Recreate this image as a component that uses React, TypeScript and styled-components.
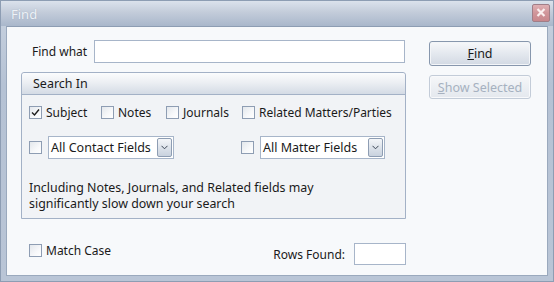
import React from 'react';
import styled, { createGlobalStyle } from 'styled-components';

const GlobalStyle = createGlobalStyle`
    html, body {
        margin: 0;
        padding: 0;
        background: #ffffff;
    }
    * {
        box-sizing: border-box;
    }
`;

const FONT = `"Noto Sans", "Open Sans", "Liberation Sans", sans-serif`;

const Window = styled.div`
    width: 554px;
    height: 282px;
    display: flex;
    flex-direction: column;
    padding: 0 5px 5px 5px;
    background: linear-gradient(to bottom, #c9d3e0 0%, #b5c2d4 30%, #b9c5d6 100%);
    border: 1px solid #8d9db3;
    font-family: ${FONT};
    font-size: 12px;
    color: #1a1a1a;
`;

const TitleBar = styled.div`
    height: 25px;
    display: flex;
    align-items: center;
    justify-content: space-between;
    margin: 0 -5px;
    padding: 0 3px 0 10px;
    background: linear-gradient(to bottom, #dbe2ec 0%, #c3ccda 45%, #a9b7cb 100%);
`;

const TitleText = styled.span`
    color: #eef2f7;
    font-size: 13px;
    text-shadow: 0 0 1px rgba(120, 135, 160, 0.5);
`;

const CloseButton = styled.div`
    width: 18px;
    height: 18px;
    margin-top: -2px;
    display: flex;
    align-items: center;
    justify-content: center;
    border: 1px solid #a07e88;
    border-radius: 2px;
    background: linear-gradient(to bottom, #dfb0b4 0%, #d0959a 50%, #c8878d 100%);
`;

const Body = styled.div`
    flex: 1;
    display: flex;
    background: #f7f9fb;
    border: 1px solid #9aa9bd;
    border-top-color: #8d9db3;
`;

const LeftColumn = styled.div`
    width: 399px;
    padding: 13px 0 0 14px;
    display: flex;
    flex-direction: column;
`;

const RightColumn = styled.div`
    padding: 14px 0 0 23px;
    display: flex;
    flex-direction: column;
    gap: 9px;
`;

const FindRow = styled.div`
    display: flex;
    align-items: center;
    height: 23px;
`;

const Label = styled.span<{ $width?: number }>`
    display: inline-block;
    width: ${(p) => (p.$width ? `${p.$width}px` : 'auto')};
    padding-left: 11px;
    white-space: nowrap;
`;

const TextBox = styled.div<{ $width: number; $height: number }>`
    width: ${(p) => p.$width}px;
    height: ${(p) => p.$height}px;
    background: #ffffff;
    border: 1px solid #a7b5c9;
`;

const GroupBox = styled.div`
    margin-top: 9px;
    width: 385px;
    height: 147px;
    border: 1px solid #a3b1c6;
    border-radius: 3px 3px 0 0;
    background: #f1f3f6;
    display: flex;
    flex-direction: column;
`;

const GroupHeader = styled.div`
    height: 22px;
    display: flex;
    align-items: center;
    padding-left: 11px;
    border-bottom: 1px solid #a3b1c6;
    border-radius: 3px 3px 0 0;
    background: linear-gradient(to bottom, #fbfcfd 0%, #eceff3 45%, #d4dbe5 100%);
    font-size: 12.5px;
`;

const GroupContent = styled.div`
    padding: 9px 0 0 7px;
    display: flex;
    flex-direction: column;
`;

const CheckRow = styled.div`
    display: flex;
    align-items: center;
    height: 16px;
`;

const ComboRow = styled.div`
    display: flex;
    align-items: center;
    margin-top: 16px;
    height: 23px;
`;

const CheckItem = styled.label<{ $width?: number }>`
    display: flex;
    align-items: center;
    gap: 4px;
    width: ${(p) => (p.$width ? `${p.$width}px` : 'auto')};
    white-space: nowrap;
`;

const Box = styled.span`
    width: 13px;
    height: 13px;
    flex: none;
    display: flex;
    align-items: center;
    justify-content: center;
    border: 1px solid #8e9db3;
    background: linear-gradient(135deg, #e3e7ec 0%, #f7f8fa 60%, #ffffff 100%);
`;

const Spacer = styled.span<{ $width: number }>`
    width: ${(p) => p.$width}px;
    flex: none;
`;

const Combo = styled.div<{ $width: number }>`
    width: ${(p) => p.$width}px;
    height: 23px;
    margin-left: 6px;
    display: flex;
    align-items: center;
    justify-content: space-between;
    padding: 0 1px 0 2px;
    background: #ffffff;
    border: 1px solid #a7b5c9;
    font-size: 12.5px;
`;

const ComboButton = styled.span`
    width: 15px;
    height: 19px;
    display: flex;
    align-items: center;
    justify-content: center;
    border: 1px solid #8e9db3;
    border-radius: 2px;
    background: linear-gradient(to bottom, #f4f6f9 0%, #dde3eb 50%, #c9d2de 100%);
`;

const Note = styled.div`
    margin-top: 21px;
    line-height: 16px;
    font-size: 12.4px;
`;

const BottomRow = styled.div`
    margin-top: 23px;
    display: flex;
    align-items: flex-start;
    justify-content: space-between;
    width: 385px;
    padding-left: 8px;
`;

const RowsFound = styled.div`
    display: flex;
    align-items: center;
    gap: 9px;
    padding-top: 1px;
`;

const Button = styled.div<{ $disabled?: boolean }>`
    width: 102px;
    height: ${(p) => (p.$disabled ? 24 : 25)}px;
    display: flex;
    align-items: center;
    justify-content: center;
    border: 1px solid ${(p) => (p.$disabled ? '#c3ccd8' : '#8797ad')};
    border-radius: 3px;
    color: ${(p) => (p.$disabled ? '#a6b1c0' : '#1a1a1a')};
    background: ${(p) =>
        p.$disabled
            ? 'linear-gradient(to bottom, #f6f7f9 0%, #eceff3 50%, #e4e8ee 100%)'
            : 'linear-gradient(to bottom, #f7f8fa 0%, #e6eaf0 45%, #d2d9e3 100%)'};
    box-shadow: inset 0 0 0 1px ${(p) => (p.$disabled ? '#f8f9fb' : '#f3f5f8')};
    font-size: 12.5px;
`;

const Mnemonic = styled.span`
    text-decoration: underline;
`;

function CheckBox({ checked }: { checked?: boolean }) {
    return (
        <Box>
            {checked && (
                <svg width="9" height="9" viewBox="0 0 9 9">
                    <polyline points="1,4.5 3.5,7 8,1.5" fill="none" stroke="#1e1e1e" strokeWidth="1.4" />
                </svg>
            )}
        </Box>
    );
}

function Select({ width, value }: { width: number; value: string }) {
    return (
        <Combo $width={width}>
            <span>{value}</span>
            <ComboButton>
                <svg width="7" height="5" viewBox="0 0 7 5">
                    <polyline points="0.5,0.8 3.5,3.8 6.5,0.8" fill="none" stroke="#3c4656" strokeWidth="1" />
                </svg>
            </ComboButton>
        </Combo>
    );
}

export default function App() {
    return (
        <>
            <GlobalStyle />
            <Window>
                <TitleBar>
                    <TitleText>Find</TitleText>
                    <CloseButton>
                        <svg width="10" height="9" viewBox="0 0 10 9">
                            <path d="M1.5 1 L8.5 8 M8.5 1 L1.5 8" stroke="#fbeff0" strokeWidth="2.2" />
                        </svg>
                    </CloseButton>
                </TitleBar>
                <Body>
                    <LeftColumn>
                        <FindRow>
                            <Label $width={73}>Find what</Label>
                            <TextBox $width={311} $height={23} />
                        </FindRow>
                        <GroupBox>
                            <GroupHeader>Search In</GroupHeader>
                            <GroupContent>
                                <CheckRow>
                                    <CheckItem $width={72}>
                                        <CheckBox checked />
                                        Subject
                                    </CheckItem>
                                    <CheckItem $width={65}>
                                        <CheckBox />
                                        Notes
                                    </CheckItem>
                                    <CheckItem $width={76}>
                                        <CheckBox />
                                        Journals
                                    </CheckItem>
                                    <CheckItem>
                                        <CheckBox />
                                        Related Matters/Parties
                                    </CheckItem>
                                </CheckRow>
                                <ComboRow>
                                    <CheckBox />
                                    <Select width={126} value="All Contact Fields" />
                                    <Spacer $width={67} />
                                    <CheckBox />
                                    <Select width={125} value="All Matter Fields" />
                                </ComboRow>
                                <Note>
                                    Including Notes, Journals, and Related fields may
                                    <br />
                                    significantly slow down your search
                                </Note>
                            </GroupContent>
                        </GroupBox>
                        <BottomRow>
                            <CheckItem>
                                <CheckBox />
                                Match Case
                            </CheckItem>
                            <RowsFound>
                                <span>Rows Found:</span>
                                <TextBox $width={52} $height={22} />
                            </RowsFound>
                        </BottomRow>
                    </LeftColumn>
                    <RightColumn>
                        <Button>
                            <span>
                                <Mnemonic>F</Mnemonic>ind
                            </span>
                        </Button>
                        <Button $disabled>
                            <span>
                                <Mnemonic>S</Mnemonic>how Selected
                            </span>
                        </Button>
                    </RightColumn>
                </Body>
            </Window>
        </>
    );
}
